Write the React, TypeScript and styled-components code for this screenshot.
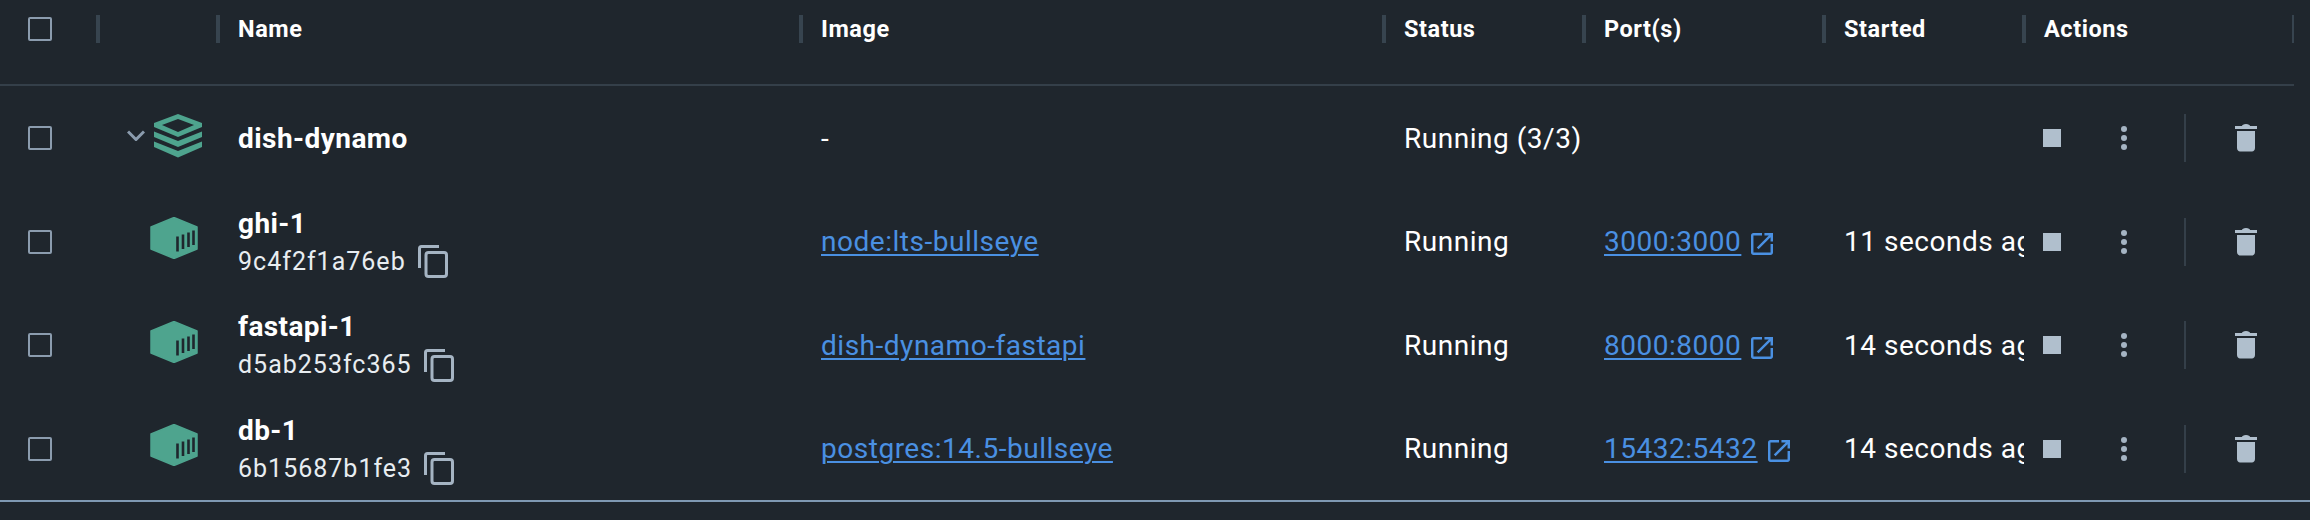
import React from "react";
import styled, { createGlobalStyle } from "styled-components";

const columns = "98px 120px 583px 583px 200px 240px 200px 286px";

const GlobalStyle = createGlobalStyle`
    html, body {
        margin: 0;
        padding: 0;
        background: #1f262d;
    }
    body {
        font-family: Roboto, "Liberation Sans", sans-serif;
    }
`;

const Page = styled.div`
    width: 2310px;
    height: 520px;
    overflow: hidden;
    background: #1f262d;
    color: #fff;
`;

const HeaderRow = styled.div`
    display: grid;
    grid-template-columns: ${columns};
    height: 69px;
    padding-top: 15px;
    position: relative;
    margin-bottom: 2.4px;

    &::after {
        content: "";
        position: absolute;
        left: 0;
        bottom: -2px;
        width: 2294px;
        height: 2px;
        background: #343f49;
    }
`;

const HeaderCell = styled.div<{ $box?: boolean }>`
    position: relative;
    height: 28px;
    display: flex;
    align-items: center;
    padding-left: ${(p) => (p.$box ? 28 : 20)}px;
    font-size: 23.5px;
    font-weight: 700;
    letter-spacing: 0.55px;
    line-height: 28px;
`;

const Resizer = styled.span<{ $thin?: boolean }>`
    position: absolute;
    right: ${(p) => (p.$thin ? 16 : -2)}px;
    top: 0;
    width: ${(p) => (p.$thin ? 2 : 4)}px;
    height: 28px;
    background: #37444f;
`;

const Row = styled.div`
    display: grid;
    grid-template-columns: ${columns};
    height: 103.5px;
    align-items: center;
`;

const CheckCell = styled.div`
    display: flex;
    align-items: center;
    padding-left: 28px;
`;

const Checkbox = styled.span`
    display: block;
    width: 24px;
    height: 24px;
    box-sizing: border-box;
    border: 2.5px solid #8b9cae;
    border-radius: 2px;
`;

const IconCell = styled.div<{ $group?: boolean }>`
    display: flex;
    align-items: center;
    padding-left: ${(p) => (p.$group ? 29 : 52)}px;
    gap: 9px;
    margin-top: ${(p) => (p.$group ? -5 : -7)}px;
`;

const Cell = styled.div`
    display: flex;
    align-items: center;
    padding-left: 20px;
    font-size: 28px;
    letter-spacing: 0.52px;
    min-width: 0;
    overflow: hidden;
    white-space: nowrap;
    height: 100%;
`;

const GroupName = styled.span`
    font-weight: 700;
    font-size: 28px;
    letter-spacing: 0.45px;
`;

const NameStack = styled.div`
    display: flex;
    flex-direction: column;
    line-height: 38px;
    padding-top: 2px;
`;

const ContainerName = styled.span`
    font-weight: 700;
    font-size: 28px;
    letter-spacing: 0.4px;
`;

const IdRow = styled.div`
    display: flex;
    align-items: center;
    gap: 12px;
    font-size: 25px;
    letter-spacing: 1px;
    color: #e8edf1;
    height: 38px;
`;

const Link = styled.a`
    color: #4a90e2;
    text-decoration: underline;
    text-underline-offset: 3px;
    text-decoration-thickness: 1.5px;
`;

const PortCell = styled(Cell)`
    gap: 10px;

    svg {
        margin-top: 5px;
    }
`;

const ActionCell = styled.div`
    display: flex;
    align-items: center;
    padding-left: 10px;
    gap: 36px;
`;

const ActionButton = styled.span`
    display: flex;
    align-items: center;
    justify-content: center;
    width: 36px;
    height: 36px;
`;

const StopIcon = styled.span`
    display: block;
    width: 18px;
    height: 18px;
    background: #b0bfcd;
`;

const Separator = styled.span`
    display: block;
    width: 2px;
    height: 48px;
    background: #343f49;
    margin: 0 6px;
`;

const Footer = styled.div`
    height: 2px;
    background: #7f99b3;
`;

const Chevron = () => (
    <svg width="18" height="11" viewBox="0 0 18 11" fill="none">
        <path d="M1 1.5 9 9.5 17 1.5" stroke="#8b9cae" strokeWidth="3" />
    </svg>
);

const StackIcon = () => (
    <svg width="48" height="44" viewBox="0 0 48 44" fill="#4ea48e">
        <path
            fillRule="evenodd"
            d="M24 0 48 9V13L24 23 0 13V9ZM24 5 8 11 24 18 40 11Z"
        />
        <path d="M0 17.5 24 27 48 17.5V23L24 33 0 23Z" />
        <path d="M0 27.5 24 37 48 27.5V33L24 43.5 0 33Z" />
    </svg>
);

const ContainerIcon = () => (
    <svg width="48" height="42" viewBox="0 0 48 42">
        <path
            d="M24 .5 47 10V32L24 41.5 1 32V10Z"
            fill="#4ea48e"
            stroke="#4ea48e"
            strokeWidth="1.5"
            strokeLinejoin="round"
        />
        <path
            d="M27.5 19.5V34.5M33 17.5V32M38.5 15.5V30M43.5 13.5V28"
            stroke="#1f262d"
            strokeWidth="2.6"
        />
    </svg>
);

const CopyIcon = () => (
    <svg width="30" height="33" viewBox="0 0 30 33" fill="none" stroke="#a5b4c3">
        <path d="M1.5 23V3.5C1.5 2.4 2.4 1.5 3.5 1.5H21" strokeWidth="3" />
        <rect x="8" y="7.5" width="20.5" height="24" rx="2.5" strokeWidth="3" />
    </svg>
);

const OpenIcon = () => (
    <svg width="22" height="22" viewBox="3 3 18 18" fill="#4a90e2">
        <path d="M19 19H5V5h7V3H5c-1.11 0-2 .9-2 2v14c0 1.1.89 2 2 2h14c1.1 0 2-.9 2-2v-7h-2v7zM14 3v2h3.59l-9.83 9.83 1.41 1.41L19 6.41V10h2V3h-7z" />
    </svg>
);

const MoreIcon = () => (
    <svg width="6" height="24" viewBox="0 0 6 24" fill="#a5b4c3">
        <circle cx="3" cy="3" r="3" />
        <circle cx="3" cy="12" r="3" />
        <circle cx="3" cy="21" r="3" />
    </svg>
);

const TrashIcon = () => (
    <svg width="22" height="28" viewBox="0 0 22 28" fill="#b0bfcd">
        <path d="M7 2C7 1 8.5 0 11 0S15 1 15 2Z" />
        <rect x="0" y="2" width="22" height="3" />
        <path d="M2 7H20V24C20 26 18.5 27.5 17 27.5H5C3.5 27.5 2 26 2 24Z" />
    </svg>
);

const Actions = () => (
    <ActionCell>
        <ActionButton>
            <StopIcon />
        </ActionButton>
        <ActionButton>
            <MoreIcon />
        </ActionButton>
        <Separator />
        <ActionButton>
            <TrashIcon />
        </ActionButton>
    </ActionCell>
);

const containers = [
    {
        name: "ghi-1",
        id: "9c4f2f1a76eb",
        image: "node:lts-bullseye",
        port: "3000:3000",
        started: "11 seconds ago",
    },
    {
        name: "fastapi-1",
        id: "d5ab253fc365",
        image: "dish-dynamo-fastapi",
        port: "8000:8000",
        started: "14 seconds ago",
    },
    {
        name: "db-1",
        id: "6b15687b1fe3",
        image: "postgres:14.5-bullseye",
        port: "15432:5432",
        started: "14 seconds ago",
    },
];

const headers = ["Name", "Image", "Status", "Port(s)", "Started", "Actions"];

const App = () => (
    <Page>
        <GlobalStyle />
        <HeaderRow>
            <HeaderCell $box>
                <Checkbox />
                <Resizer />
            </HeaderCell>
            <HeaderCell>
                <Resizer />
            </HeaderCell>
            {headers.map((label, i) => (
                <HeaderCell key={label}>
                    {label}
                    <Resizer $thin={i === headers.length - 1} />
                </HeaderCell>
            ))}
        </HeaderRow>
        <Row>
            <CheckCell>
                <Checkbox />
            </CheckCell>
            <IconCell $group>
                <Chevron />
                <StackIcon />
            </IconCell>
            <Cell>
                <GroupName>dish-dynamo</GroupName>
            </Cell>
            <Cell>-</Cell>
            <Cell>Running (3/3)</Cell>
            <Cell />
            <Cell />
            <Actions />
        </Row>
        {containers.map((c) => (
            <Row key={c.name}>
                <CheckCell>
                    <Checkbox />
                </CheckCell>
                <IconCell>
                    <ContainerIcon />
                </IconCell>
                <Cell>
                    <NameStack>
                        <ContainerName>{c.name}</ContainerName>
                        <IdRow>
                            {c.id}
                            <CopyIcon />
                        </IdRow>
                    </NameStack>
                </Cell>
                <Cell>
                    <Link>{c.image}</Link>
                </Cell>
                <Cell>Running</Cell>
                <PortCell>
                    <Link>{c.port}</Link>
                    <OpenIcon />
                </PortCell>
                <Cell>{c.started}</Cell>
                <Actions />
            </Row>
        ))}
        <Footer />
    </Page>
);

export default App;
